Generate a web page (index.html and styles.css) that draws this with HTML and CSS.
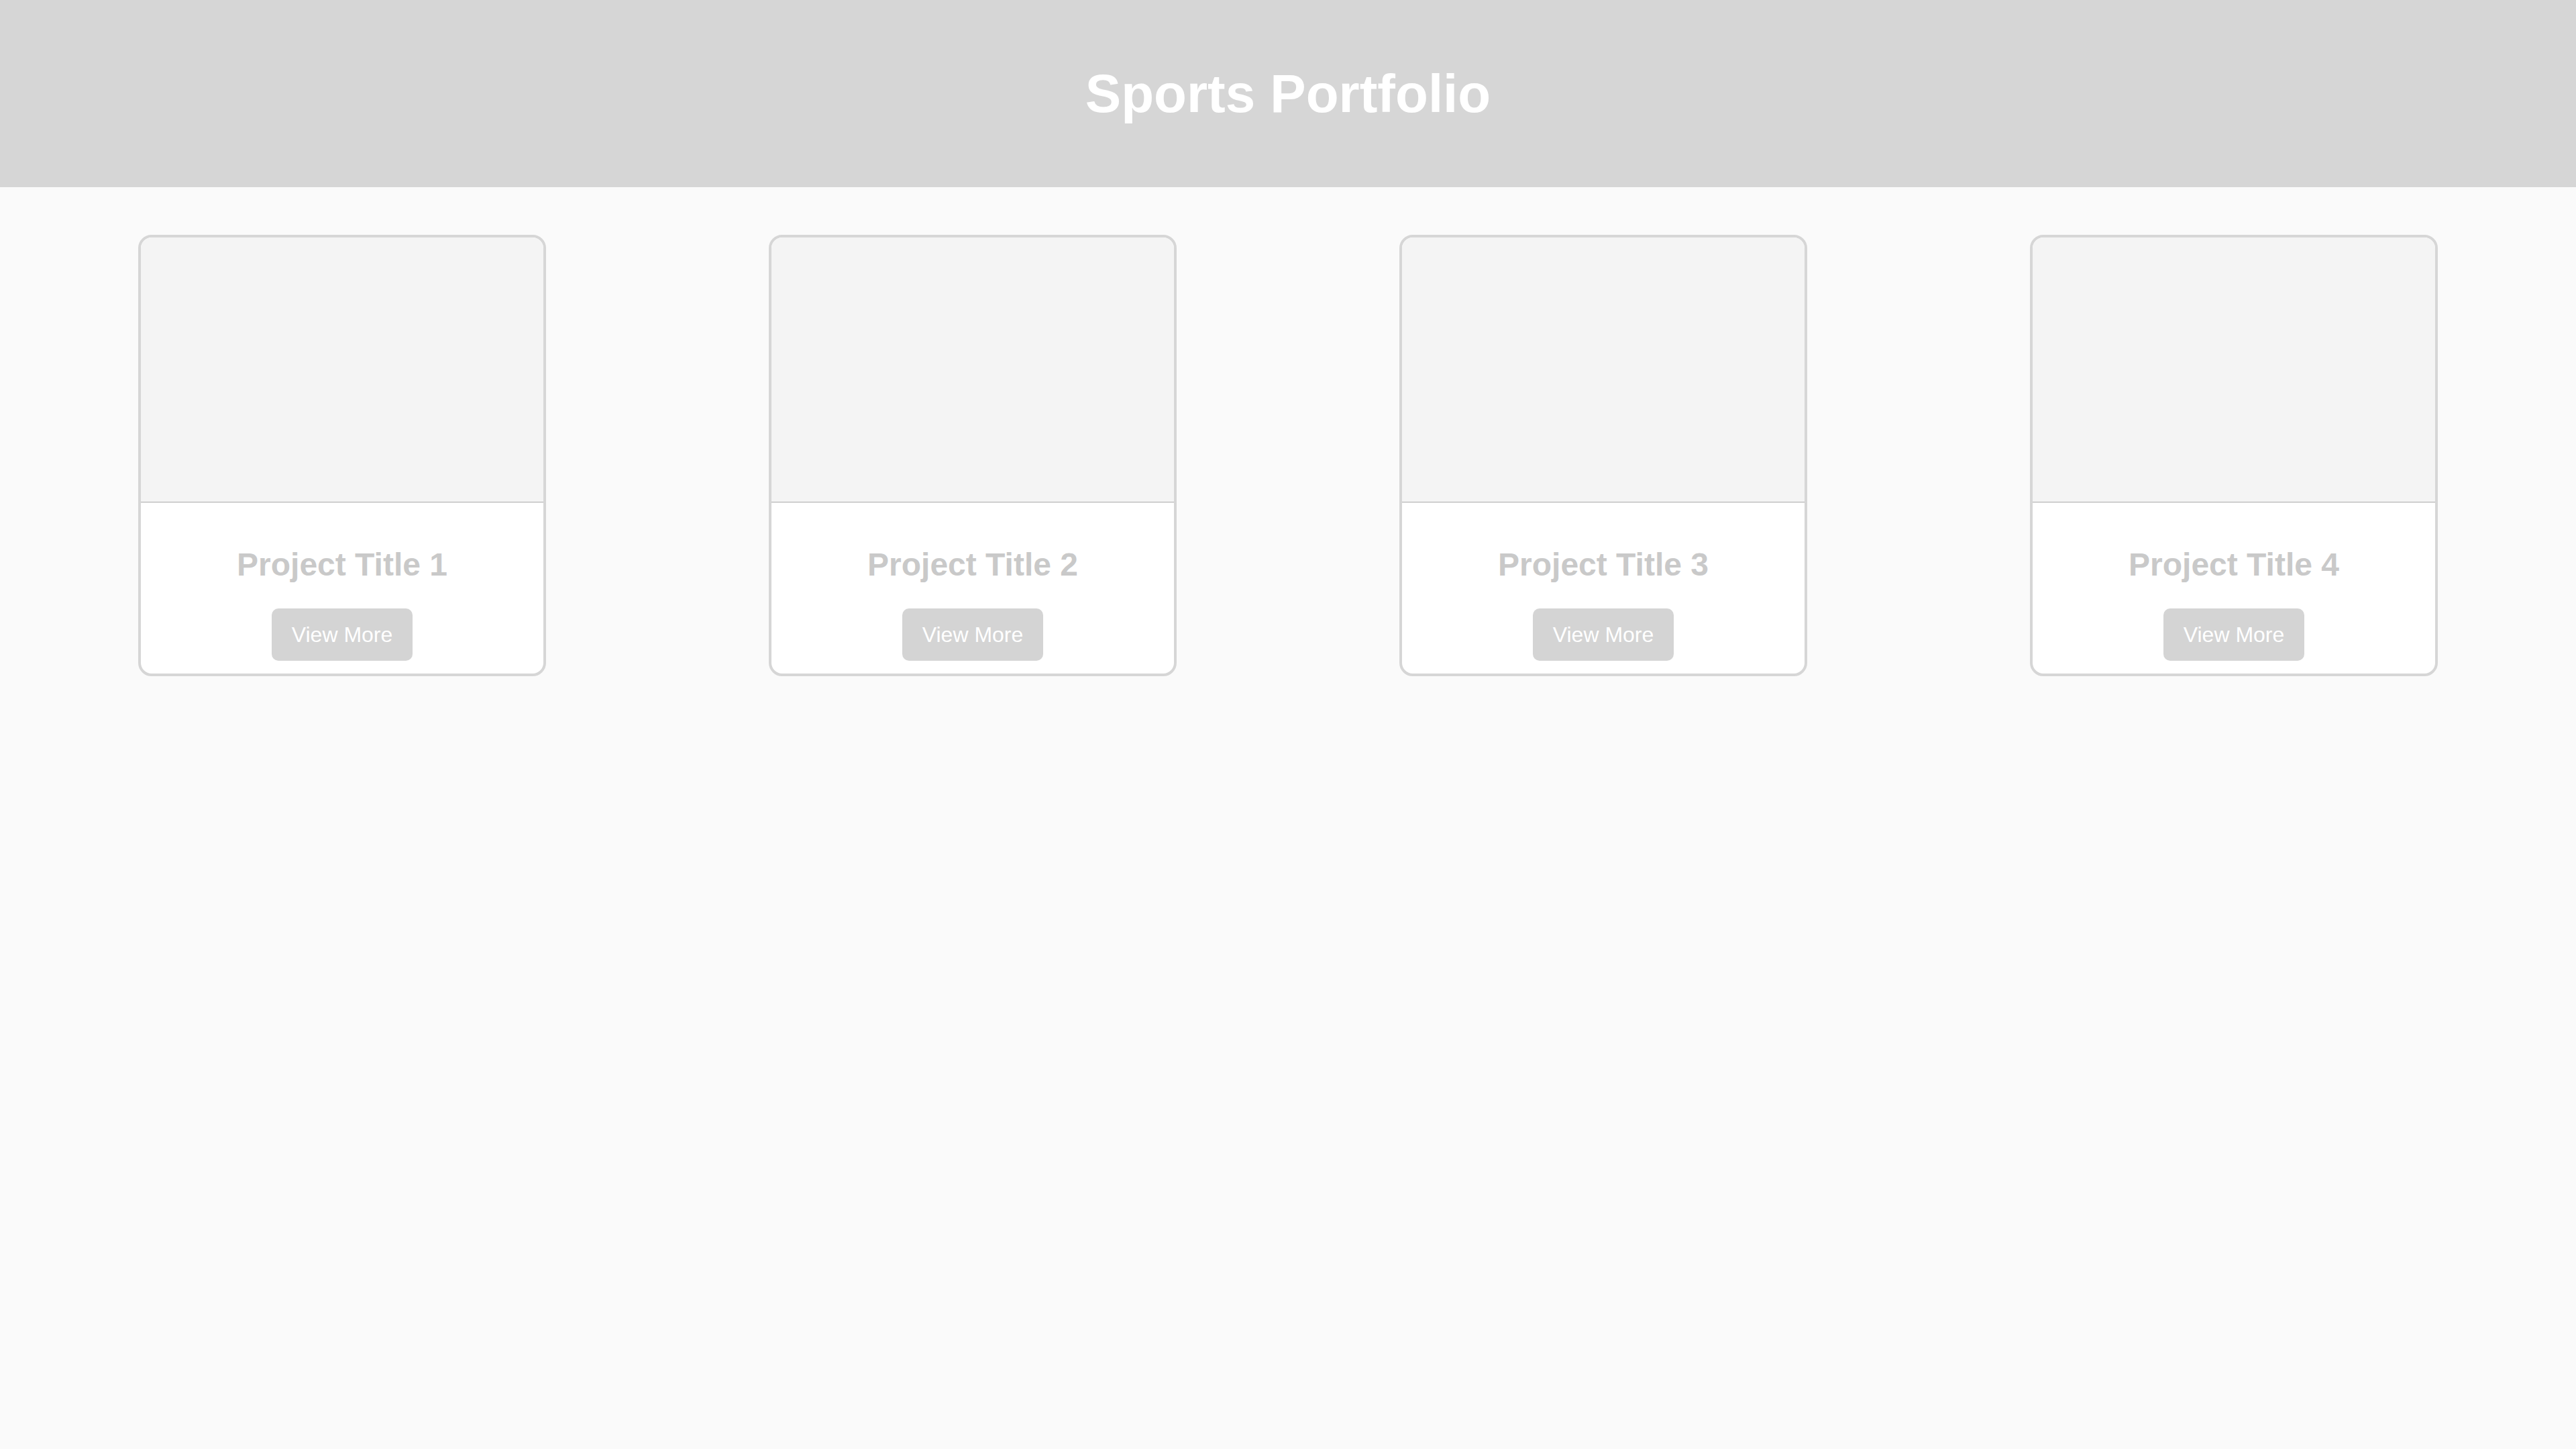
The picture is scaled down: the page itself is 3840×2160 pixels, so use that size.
FILE: index.html
```html
<!DOCTYPE html>
<html lang="en">
<head>
<meta charset="utf-8">
<title>Sports Portfolio</title>
<link rel="stylesheet" href="styles.css">
</head>
<body>
<header class="site-header">
  <h1 class="site-title">Sports Portfolio</h1>
</header>
<main class="grid">
  <article class="card">
    <div class="card-image"></div>
    <div class="card-body">
      <h3 class="card-title">Project Title 1</h3>
      <button class="card-btn">View More</button>
    </div>
  </article>
  <article class="card">
    <div class="card-image"></div>
    <div class="card-body">
      <h3 class="card-title">Project Title 2</h3>
      <button class="card-btn">View More</button>
    </div>
  </article>
  <article class="card">
    <div class="card-image"></div>
    <div class="card-body">
      <h3 class="card-title">Project Title 3</h3>
      <button class="card-btn">View More</button>
    </div>
  </article>
  <article class="card">
    <div class="card-image"></div>
    <div class="card-body">
      <h3 class="card-title">Project Title 4</h3>
      <button class="card-btn">View More</button>
    </div>
  </article>
</main>
</body>
</html>
```
FILE: styles.css
```css
* { box-sizing: border-box; }
html, body {
  margin: 0;
  padding: 0;
  background: #fafafa;
  font-family: "Liberation Sans", Arial, sans-serif;
}
.site-header {
  height: 279px;
  background: #d6d6d6;
  display: flex;
  align-items: center;
  justify-content: center;
}
.site-title {
  margin: 0;
  font-size: 80px;
  font-weight: bold;
  color: #ffffff;
  line-height: 1;
}
.grid {
  display: grid;
  grid-template-columns: repeat(4, 1fr);
  justify-items: center;
  padding: 71px 40px 0;
}
.card {
  width: 608px;
  background: #ffffff;
  border: 4px solid #d6d6d6;
  border-radius: 20px;
  overflow: hidden;
}
.card-image {
  height: 395px;
  background: #f4f4f4;
  border-bottom: 1px solid #a9a9a9;
}
.card-body {
  display: flex;
  flex-direction: column;
  align-items: center;
  padding: 65px 0 19px;
}
.card-title {
  margin: 0 0 38px;
  font-size: 48px;
  font-weight: bold;
  line-height: 55px;
  color: #c9c9c9;
}
.card-btn {
  font-family: "Liberation Sans", Arial, sans-serif;
  font-size: 32px;
  line-height: 38px;
  padding: 20px 30px;
  white-space: nowrap;
  border: none;
  border-radius: 10px;
  background: #d4d4d4;
  color: #ffffff;
}
```
